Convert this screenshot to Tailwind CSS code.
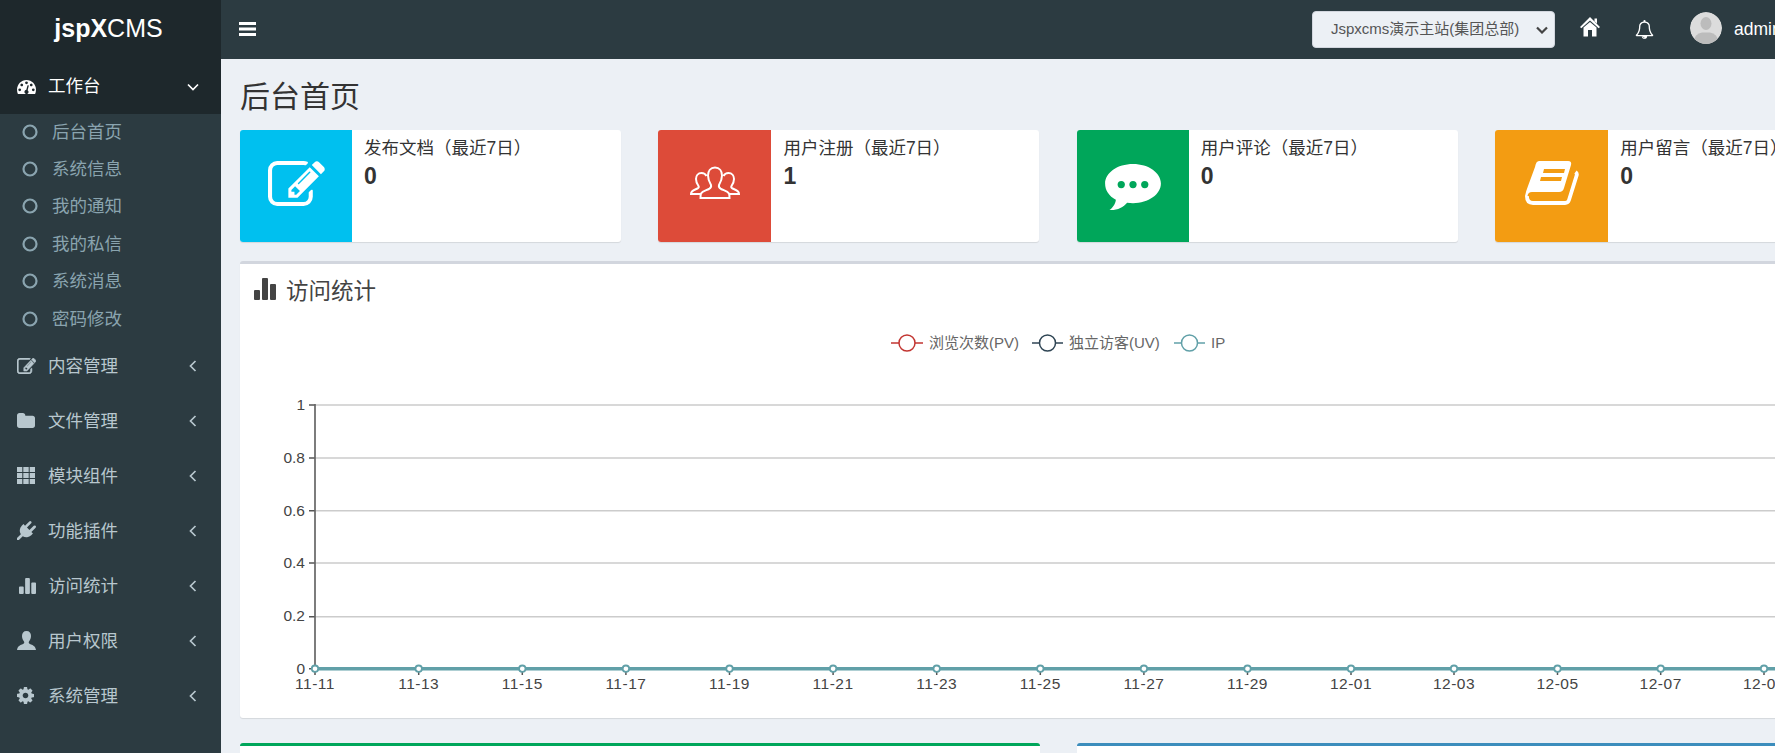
<!DOCTYPE html>
<html>
  <head>
    <meta charset="utf-8" />
    <script src="https://cdn.jsdelivr.net/npm/@tailwindcss/browser@4"></script>
  </head>
  <body class="bg-[#ecf0f5]">
    <div class="flex w-[1775px] h-[753px] overflow-hidden font-['Liberation_Sans','Noto_Sans_CJK_SC',sans-serif]">
      <!-- sidebar -->
      <aside class="w-[221px] shrink-0 bg-[#2c3b41] text-[17.5px] text-[#b8c7ce]">
        <div class="h-[59px] bg-[#1e282c] flex items-center justify-center text-[25px] text-white pb-[2px] pr-[4px]">
          <b>jspX</b>CMS
        </div>

        <div class="h-[55px] bg-[#1e282c] flex items-center pl-[17px] pr-[22px] text-white">
          <svg class="shrink-0 mr-[12px]" width="19" height="14" viewBox="0 256 1792 1280" preserveAspectRatio="none"><path fill="currentColor" d="M384 1152q0-53-37.500-90.500t-90.500-37.500-90.500 37.500-37.500 90.500 37.500 90.500 90.500 37.500 90.500-37.500 37.500-90.500zm192-448q0-53-37.500-90.500t-90.500-37.500-90.500 37.500-37.500 90.500 37.500 90.500 90.500 37.500 90.500-37.500 37.500-90.500zm428 481l101-382q6-26-7.500-48.500t-38.500-29.500-48 6.500-30 39.500l-101 382q-60 5-107 43.500t-63 98.500q-20 77 20 146t117 89 146-20 89-117q16-60-6-117t-72-91zm660-33q0-53-37.500-90.500t-90.500-37.500-90.500 37.500-37.500 90.500 37.500 90.500 90.500 37.500 90.500-37.500 37.500-90.500zm-640-640q0-53-37.500-90.500t-90.500-37.500-90.500 37.500-37.500 90.500 37.500 90.500 90.500 37.500 90.500-37.500 37.500-90.500zm448 192q0-53-37.500-90.500t-90.500-37.500-90.500 37.500-37.500 90.500 37.500 90.500 90.500 37.500 90.500-37.500 37.500-90.500zm320 448q0 261-141 483-19 29-54 29h-1402q-35 0-54-29-141-221-141-483 0-182 71-348t191-286 286-191 348-71 348 71 286 191 191 286 71 348z"/></svg>
          <span>工作台</span>
          <svg class="ml-auto" width="12" height="8" viewBox="0 0 12 8"><path d="M1 1.500l5 5 5-5" fill="none" stroke="currentColor" stroke-width="1.700"/></svg>
        </div>

        <ul class="-mt-[1px] mb-[1px] text-[#8aa4af]">
          <li class="h-[37.4px] flex items-center pl-[22px]"><svg class="shrink-0 mr-[14px]" width="16" height="16" viewBox="0 0 16 16"><circle cx="8" cy="8" r="6.500" fill="none" stroke="currentColor" stroke-width="2.200"/></svg>后台首页</li>
          <li class="h-[37.4px] flex items-center pl-[22px]"><svg class="shrink-0 mr-[14px]" width="16" height="16" viewBox="0 0 16 16"><circle cx="8" cy="8" r="6.500" fill="none" stroke="currentColor" stroke-width="2.200"/></svg>系统信息</li>
          <li class="h-[37.4px] flex items-center pl-[22px]"><svg class="shrink-0 mr-[14px]" width="16" height="16" viewBox="0 0 16 16"><circle cx="8" cy="8" r="6.500" fill="none" stroke="currentColor" stroke-width="2.200"/></svg>我的通知</li>
          <li class="h-[37.4px] flex items-center pl-[22px]"><svg class="shrink-0 mr-[14px]" width="16" height="16" viewBox="0 0 16 16"><circle cx="8" cy="8" r="6.500" fill="none" stroke="currentColor" stroke-width="2.200"/></svg>我的私信</li>
          <li class="h-[37.4px] flex items-center pl-[22px]"><svg class="shrink-0 mr-[14px]" width="16" height="16" viewBox="0 0 16 16"><circle cx="8" cy="8" r="6.500" fill="none" stroke="currentColor" stroke-width="2.200"/></svg>系统消息</li>
          <li class="h-[37.4px] flex items-center pl-[22px]"><svg class="shrink-0 mr-[14px]" width="16" height="16" viewBox="0 0 16 16"><circle cx="8" cy="8" r="6.500" fill="none" stroke="currentColor" stroke-width="2.200"/></svg>密码修改</li>
        </ul>

        <div class="h-[55px] flex items-center pl-[17px] pr-[24px]">
          <svg class="shrink-0 mr-[12px]" width="19" height="16" viewBox="0 128 1792 1408" preserveAspectRatio="none"><path fill="currentColor" stroke="currentColor" stroke-width="50" d="M888 1184l116-116-152-152-116 116v56h96v96h56zm440-720q-16-16-33 1l-350 350q-17 17-1 33t33-1l350-350q17-17 1-33zm80 594v190q0 119-84.500 203.500t-203.500 84.500h-832q-119 0-203.500-84.500t-84.500-203.500v-832q0-119 84.500-203.500t203.500-84.500h832q63 0 117 25 15 7 18 23 3 17-9 29l-49 49q-14 14-32 8-23-6-45-6h-832q-66 0-113 47t-47 113v832q0 66 47 113t113 47h832q66 0 113-47t47-113v-126q0-13 9-22l64-64q15-15 35-7t20 29zm-96-738l288 288-672 672h-288v-288zm444 132l-92 92-288-288 92-92q28-28 68-28t68 28l152 152q28 28 28 68t-28 68z"/></svg>
          <span>内容管理</span>
          <svg class="ml-auto" width="8" height="12" viewBox="0 0 8 12"><path d="M6.500 1l-5 5 5 5" fill="none" stroke="currentColor" stroke-width="1.700"/></svg>
        </div>
        <div class="h-[55px] flex items-center pl-[17px] pr-[24px]">
          <svg class="shrink-0 mr-[13px]" width="18" height="15" viewBox="64 128 1664 1408" preserveAspectRatio="none"><path fill="currentColor" d="M1728 608v704q0 92-66 158t-158 66h-1216q-92 0-158-66t-66-158v-960q0-92 66-158t158-66h320q92 0 158 66t66 158v32h672q92 0 158 66t66 158z"/></svg>
          <span>文件管理</span>
          <svg class="ml-auto" width="8" height="12" viewBox="0 0 8 12"><path d="M6.500 1l-5 5 5 5" fill="none" stroke="currentColor" stroke-width="1.700"/></svg>
        </div>
        <div class="h-[55px] flex items-center pl-[17px] pr-[24px]">
          <svg class="shrink-0 mr-[13px]" width="18" height="17" viewBox="0 0 18 18" preserveAspectRatio="none"><path fill="currentColor" d="M0 0h5.300v5.300H0zM6.300 0h5.400v5.300H6.300zM12.700 0H18v5.300h-5.300zM0 6.300h5.300v5.400H0zM6.300 6.300h5.400v5.400H6.300zM12.700 6.300H18v5.400h-5.300zM0 12.700h5.300V18H0zM6.300 12.700h5.400V18H6.300zM12.700 12.700H18V18h-5.300z"/></svg>
          <span>模块组件</span>
          <svg class="ml-auto" width="8" height="12" viewBox="0 0 8 12"><path d="M6.500 1l-5 5 5 5" fill="none" stroke="currentColor" stroke-width="1.700"/></svg>
        </div>
        <div class="h-[55px] flex items-center pl-[17px] pr-[24px]">
          <svg class="shrink-0 mr-[12px]" width="19" height="19" viewBox="0 0 1792 1792"><path fill="currentColor" d="M1755 453q37 38 37 90.500t-37 90.500l-401 400 150 150-160 160q-163 163-389.500 186.500t-411.500-100.500l-362 362h-181v-181l362-362q-124-185-100.500-411.500t186.500-389.500l160-160 150 150 400-401q38-37 91-37t90 37 37 90.500-37 90.500l-400 401 234 234 401-400q38-37 91-37t90 37z"/></svg>
          <span>功能插件</span>
          <svg class="ml-auto" width="8" height="12" viewBox="0 0 8 12"><path d="M6.500 1l-5 5 5 5" fill="none" stroke="currentColor" stroke-width="1.700"/></svg>
        </div>
        <div class="h-[55px] flex items-center pl-[19px] pr-[24px]">
          <svg class="shrink-0 mr-[12px]" width="17" height="16" viewBox="0 0 18 18" preserveAspectRatio="none"><path fill="currentColor" d="M0 10.500q0-1 1-1h3q1 0 1 1V17q0 1-1 1H1q-1 0-1-1zM6.500 1q0-1 1-1h3q1 0 1 1v16q0 1-1 1h-3q-1 0-1-1zM13 6q0-1 1-1h3q1 0 1 1v11q0 1-1 1h-3q-1 0-1-1z"/></svg>
          <span>访问统计</span>
          <svg class="ml-auto" width="8" height="12" viewBox="0 0 8 12"><path d="M6.500 1l-5 5 5 5" fill="none" stroke="currentColor" stroke-width="1.700"/></svg>
        </div>
        <div class="h-[55px] flex items-center pl-[17px] pr-[24px]">
          <svg class="shrink-0 mr-[12px]" width="19" height="19" viewBox="0 0 19 19"><path fill="currentColor" d="M9.500 0C6.500 0 5 2 5 5c0 2 .8 4 2 5.500.5 1 .3 2-1 2.500C3.500 14 .5 15 0 19h19c-.5-4-3.500-5-6-6-1.300-.5-1.500-1.500-1-2.500 1.200-1.500 2-3.500 2-5.500 0-3-1.500-5-4.500-5z"/></svg>
          <span>用户权限</span>
          <svg class="ml-auto" width="8" height="12" viewBox="0 0 8 12"><path d="M6.500 1l-5 5 5 5" fill="none" stroke="currentColor" stroke-width="1.700"/></svg>
        </div>
        <div class="h-[55px] flex items-center pl-[17px] pr-[24px]">
          <svg class="shrink-0 mr-[14px]" width="17" height="17" viewBox="128 128 1536 1536"><path fill="currentColor" d="M1152 896q0-106-75-181t-181-75-181 75-75 181 75 181 181 75 181-75 75-181zm512-109v222q0 12-8 23t-20 13l-185 28q-19 54-39 91 35 50 107 138 10 12 10 25t-9 23q-27 37-99 108t-94 71q-12 0-26-9l-138-108q-44 23-91 38-16 136-29 186-7 28-36 28h-222q-14 0-24.500-8.500t-11.500-21.500l-28-184q-49-16-90-37l-141 107q-10 9-25 9-14 0-25-11-126-114-165-168-7-10-7-23 0-12 8-23 15-21 51-66.500t54-70.500q-27-50-41-99l-183-27q-13-2-21-12.500t-8-23.500v-222q0-12 8-23t19-13l186-28q14-46 39-92-40-57-107-138-10-12-10-24 0-10 9-23 26-36 98.500-107.500t94.500-71.500q13 0 26 10l138 107q44-23 91-38 16-136 29-186 7-28 36-28h222q14 0 24.500 8.500t11.500 21.500l28 184q49 16 90 37l142-107q9-9 24-9 13 0 25 10 129 119 165 170 7 8 7 22 0 12-8 23-15 21-51 66.500t-54 70.500q26 50 41 98l183 28q13 2 21 12.500t8 23.500z"/></svg>
          <span>系统管理</span>
          <svg class="ml-auto" width="8" height="12" viewBox="0 0 8 12"><path d="M6.500 1l-5 5 5 5" fill="none" stroke="currentColor" stroke-width="1.700"/></svg>
        </div>
      </aside>

      <div class="flex-1 min-w-0 overflow-hidden">
        <!-- top bar -->
        <header class="h-[59px] bg-[#2c3b41] flex items-center pl-[18px] text-white">
          <svg class="shrink-0 mb-[2px]" width="17" height="14" viewBox="0 0 17 14"><path fill="currentColor" d="M0 0h17v3H0zM0 5.500h17v3H0zM0 11h17v3H0z"/></svg>
          <div class="ml-[1056px] shrink-0 w-[243px] h-[37px] bg-[#ecf0f5] rounded-[4px] border border-[#d2d6de] flex items-center pl-[18px] pr-[6px] text-[15px] text-[#555]">
            <span class="whitespace-nowrap">Jspxcms演示主站(集团总部)</span>
            <svg class="ml-auto" width="12" height="8" viewBox="0 0 12 8"><path d="M1 1.500l5 5 5-5" fill="none" stroke="#444" stroke-width="2.200"/></svg>
          </div>
          <svg class="ml-[25px] shrink-0 mb-[5px]" width="20" height="20" viewBox="0 0 20 20"><path fill="currentColor" d="M10 0l10 10-1.300 1.300L10 3.500 1.300 11.300 0 10zM14.500 1.500H17v5l-2.500-2.200zM3.500 10.500L10 5l6.500 5.500V19.500H12V13H8v6.500H3.500z"/></svg>
          <svg class="ml-[35px] shrink-0 mt-[-1px]" width="19" height="19" viewBox="0 0 1792 1792"><path fill="currentColor" d="M912 1696q0-16-16-16-59 0-101.500-42.500t-42.500-101.500q0-16-16-16t-16 16q0 73 51.500 124.500t124.500 51.500q16 0 16-16zm-666-288h1300q-266-300-266-832 0-51-24-105t-69-103-121.500-80.500-169.500-31.500-169.500 31.500-121.500 80.500-69 103-24 105q0 532-266 832zm1482 0q0 52-38 90t-90 38h-448q0 106-75 181t-181 75-181-75-75-181h-448q-52 0-90-38t-38-90q50-42 91-88t85-119.500 74.500-158.500 50-206 19.500-260q0-152 117-282.500t307-158.500q-8-19-8-39 0-40 28-68t68-28 68 28 28 68q0 20-8 39 190 28 307 158.500t117 282.500q0 139 19.500 260t50 206 74.500 158.500 85 119.500 91 88z"/></svg>
          <svg class="ml-[36px] shrink-0 rounded-full mt-[-3px]" width="32" height="32" viewBox="0 0 32 32"><circle cx="16" cy="16" r="16" fill="#dcdcdc"/><ellipse cx="16" cy="11.500" rx="5.500" ry="6.500" fill="#bcbcbc"/><path d="M4 28q1-6 8-7.500h8q7 1.500 8 7.500a16 16 0 0 1-24 0z" fill="#bcbcbc"/></svg>
          <span class="ml-[12px] text-[17.5px]">admin</span>
        </header>

        <!-- content -->
        <main class="w-[1676px] pl-[19px] text-[#333]">
          <h1 class="h-[71px] flex items-center pt-[3px] text-[30px] text-[#333]">后台首页</h1>

          <div class="grid grid-cols-[repeat(4,381px)] gap-x-[37.400px] w-[1637px]">
            <div class="flex h-[112px] bg-white rounded-[3px] shadow-[0_1px_1px_rgba(0,0,0,0.1)] overflow-hidden">
              <div class="w-[112px] bg-[#00c0ef] flex items-center justify-center text-white">
                <svg class="mb-[6px]" width="57" height="45" viewBox="0 128 1792 1408" preserveAspectRatio="none"><path fill="currentColor" d="M888 1184l116-116-152-152-116 116v56h96v96h56zm440-720q-16-16-33 1l-350 350q-17 17-1 33t33-1l350-350q17-17 1-33zm80 594v190q0 119-84.500 203.500t-203.500 84.500h-832q-119 0-203.500-84.500t-84.500-203.500v-832q0-119 84.500-203.500t203.500-84.500h832q63 0 117 25 15 7 18 23 3 17-9 29l-49 49q-14 14-32 8-23-6-45-6h-832q-66 0-113 47t-47 113v832q0 66 47 113t113 47h832q66 0 113-47t47-113v-126q0-13 9-22l64-64q15-15 35-7t20 29zm-96-738l288 288-672 672h-288v-288zm444 132l-92 92-288-288 92-92q28-28 68-28t68 28l152 152q28 28 28 68t-28 68z"/></svg>
              </div>
              <div class="pl-[12px] pt-[6px]">
                <div class="text-[17.500px] leading-[24px]">发布文档（最近7日）</div>
                <div class="text-[23px] font-bold leading-[32px]">0</div>
              </div>
            </div>
            <div class="flex h-[112px] bg-white rounded-[3px] shadow-[0_1px_1px_rgba(0,0,0,0.1)] overflow-hidden">
              <div class="w-[113px] bg-[#dd4b39] flex items-center justify-center">
                <svg class="mb-[6px]" width="50" height="34" viewBox="0 0 50 34"><g fill="none" stroke="#fff" stroke-width="2"><path d="M25 1.500c-4.500 0-7 3.500-7 8 0 3.500 1.500 7 3 9.500 .5 1.500-.5 3-2 4-3 1.500-6.500 2-8 4.500-.5 1-.5 2-.5 4.500h29c0-2.500 0-3.500-.5-4.500-1.500-2.500-5-3-8-4.500-1.500-1-2.500-2.500-2-4 1.500-2.500 3-6 3-9.500 0-4.500-2.500-8-7-8z"/><path d="M16.500 10c-1-2-2.500-3-5-3-3.500 0-5.500 3-5.500 6 0 3 1 5 2.500 7 .5 1 0 2-1 2.500-2 1-4 1.500-5.500 3-.5.5-1 1.500-1 2.500h9"/><path transform="matrix(-1 0 0 1 50 0)" d="M16.500 10c-1-2-2.500-3-5-3-3.500 0-5.500 3-5.500 6 0 3 1 5 2.500 7 .5 1 0 2-1 2.500-2 1-4 1.500-5.500 3-.5.5-1 1.500-1 2.500h9"/></g></svg>
              </div>
              <div class="pl-[12px] pt-[6px]">
                <div class="text-[17.500px] leading-[24px]">用户注册（最近7日）</div>
                <div class="text-[23px] font-bold leading-[32px]">1</div>
              </div>
            </div>
            <div class="flex h-[112px] bg-white rounded-[3px] shadow-[0_1px_1px_rgba(0,0,0,0.1)] overflow-hidden">
              <div class="w-[112px] bg-[#00a65a] flex items-center justify-center">
                <svg class="mt-[2px]" width="58" height="47" viewBox="0 0 58 48"><path fill="#fff" d="M29 0c16 0 28.500 9 28.500 20S45 40 29 40c-2 0-4-.2-6-.5C19 44 13 47.500 5 47c3-2 6-6 6.500-10.500C4.500 33 .5 27 .5 20 .5 9 13 0 29 0z"/><circle cx="17" cy="21" r="3.700" fill="#00a65a"/><circle cx="29" cy="21" r="3.700" fill="#00a65a"/><circle cx="41" cy="21" r="3.700" fill="#00a65a"/></svg>
              </div>
              <div class="pl-[12px] pt-[6px]">
                <div class="text-[17.500px] leading-[24px]">用户评论（最近7日）</div>
                <div class="text-[23px] font-bold leading-[32px]">0</div>
              </div>
            </div>
            <div class="flex h-[112px] bg-white rounded-[3px] shadow-[0_1px_1px_rgba(0,0,0,0.1)] overflow-hidden">
              <div class="w-[113px] bg-[#f39c12] flex items-center justify-center">
                <svg class="mb-[6px]" width="54" height="44" viewBox="10 6 54 44"><path fill="#fff" d="M24 6H53Q57 6 56 10L49 33Q48 37 44 37H17Q13 37 12.500 41L10 41Q11 36 13 31L20 12Q21 6 24 6z"/><path fill="none" stroke="#fff" stroke-width="3.800" d="M11.900 41Q11.900 48 18 48H50Q53 48 54 45L61.500 21Q62.500 18.500 60.500 17"/><path fill="#f39c12" d="M29 14H50L49 18H28zM26 22H47L46 26H25z"/></svg>
              </div>
              <div class="pl-[12px] pt-[6px]">
                <div class="text-[17.500px] leading-[24px] whitespace-nowrap">用户留言（最近7日）</div>
                <div class="text-[23px] font-bold leading-[32px]">0</div>
              </div>
            </div>
          </div>

          <!-- chart box -->
          <section class="mt-[19px] w-[1637px] bg-white rounded-[3px] border-t-[3px] border-[#d2d6de] shadow-[0_1px_1px_rgba(0,0,0,0.1)]">
            <div class="h-[56px] flex items-start pl-[14px] pt-[12px] text-[22.500px] text-[#444]">
              <svg class="mt-[2px] mr-[10px]" width="22" height="22" viewBox="0 0 22 22"><path fill="currentColor" d="M0 13q0-1 1-1h4q1 0 1 1v8q0 1-1 1H1q-1 0-1-1zM8 1q0-1 1-1h4q1 0 1 1v20q0 1-1 1H9q-1 0-1-1zM16 7q0-1 1-1h4q1 0 1 1v14q0 1-1 1h-4q-1 0-1-1z"/></svg>
              <span class="leading-[32px]">访问统计</span>
            </div>
            <svg class="block" width="1637" height="398" viewBox="240 320 1637 398" font-size="15" fill="#444">
              <defs>
                <g id="tick"><path d="M0 669v6" stroke="#555" stroke-width="1.500"/></g>
                <g id="dot"><circle cx="0" cy="668.700" r="3.200" fill="#fff" stroke="#61a0a8" stroke-width="1.800"/></g>
              </defs>
              <!-- legend -->
              <g fill="none" stroke-width="1.500">
                <path d="M891 343h32" stroke="#c23531"/><circle cx="907" cy="343" r="8" fill="#fff" stroke="#c23531"/>
                <path d="M1032 343h31" stroke="#2f4554"/><circle cx="1047.500" cy="343" r="8" fill="#fff" stroke="#2f4554"/>
                <path d="M1174 343h31" stroke="#61a0a8"/><circle cx="1189.500" cy="343" r="8" fill="#fff" stroke="#61a0a8"/>
              </g>
              <g fill="#666">
                <text x="929" y="348">浏览次数(PV)</text>
                <text x="1069" y="348">独立访客(UV)</text>
                <text x="1211" y="348">IP</text>
              </g>
              <!-- grid -->
              <g stroke="#ccc" stroke-width="1.500">
                <path d="M315 405h1562M315 458h1562M315 510.700h1562M315 563h1562M315 616.700h1562"/>
              </g>
              <path d="M309 405h6M309 458h6M309 510.700h6M309 563h6M309 616.700h6M309 668.700h6" stroke="#555" stroke-width="1.500"/>
              <path d="M315 404v271" stroke="#666" stroke-width="1.700"/>
              <g text-anchor="end" font-size="15.500">
                <text x="305" y="410">1</text>
                <text x="305" y="463">0.8</text>
                <text x="305" y="516">0.6</text>
                <text x="305" y="568">0.4</text>
                <text x="305" y="621">0.2</text>
                <text x="305" y="674">0</text>
              </g>
              <!-- x axis -->
              <use href="#tick" x="418.700"/><use href="#tick" x="522.300"/><use href="#tick" x="625.900"/><use href="#tick" x="729.500"/><use href="#tick" x="833.100"/><use href="#tick" x="936.700"/><use href="#tick" x="1040.300"/><use href="#tick" x="1143.900"/><use href="#tick" x="1247.500"/><use href="#tick" x="1351"/><use href="#tick" x="1454"/><use href="#tick" x="1557.500"/><use href="#tick" x="1660.700"/><use href="#tick" x="1764"/>
              <path d="M315 668.700h1562" stroke="#61a0a8" stroke-width="3.500"/>
              <use href="#dot" x="315"/><use href="#dot" x="418.700"/><use href="#dot" x="522.300"/><use href="#dot" x="625.900"/><use href="#dot" x="729.500"/><use href="#dot" x="833.100"/><use href="#dot" x="936.700"/><use href="#dot" x="1040.300"/><use href="#dot" x="1143.900"/><use href="#dot" x="1247.500"/><use href="#dot" x="1351"/><use href="#dot" x="1454"/><use href="#dot" x="1557.500"/><use href="#dot" x="1660.700"/><use href="#dot" x="1764"/>
              <g text-anchor="middle" font-size="15.500" letter-spacing="0.500">
                <text x="315" y="689">11-11</text>
                <text x="418.700" y="689">11-13</text>
                <text x="522.300" y="689">11-15</text>
                <text x="625.900" y="689">11-17</text>
                <text x="729.500" y="689">11-19</text>
                <text x="833.100" y="689">11-21</text>
                <text x="936.700" y="689">11-23</text>
                <text x="1040.300" y="689">11-25</text>
                <text x="1143.900" y="689">11-27</text>
                <text x="1247.500" y="689">11-29</text>
                <text x="1351" y="689">12-01</text>
                <text x="1454" y="689">12-03</text>
                <text x="1557.500" y="689">12-05</text>
                <text x="1660.700" y="689">12-07</text>
                <text x="1764" y="689">12-09</text>
              </g>
            </svg>
          </section>

          <div class="mt-[25px] grid grid-cols-2 gap-x-[37.500px] w-[1637px]">
            <div class="h-[40px] bg-white rounded-t-[3px] border-t-[3px] border-[#00a65a]"></div>
            <div class="h-[40px] bg-white rounded-t-[3px] border-t-[3px] border-[#3c8dbc]"></div>
          </div>
        </main>
      </div>
    </div>
  </body>
</html>
